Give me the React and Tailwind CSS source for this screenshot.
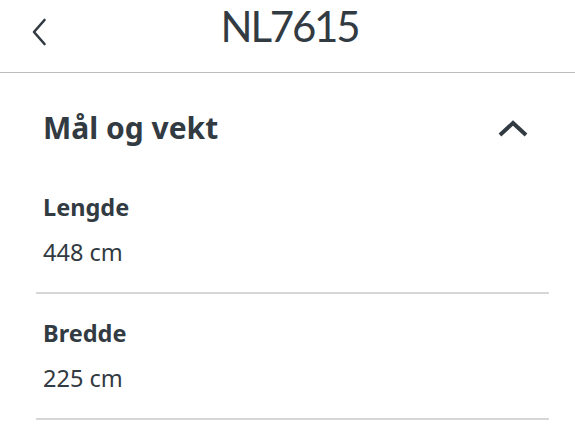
export default function App() {
  const rows = [
    { label: 'Lengde', value: '448 cm' },
    { label: 'Bredde', value: '225 cm' },
  ];
  return (
    <div className="w-[575px] h-[432px] bg-white text-[#323a42] overflow-hidden" style={{ fontFamily: '"Noto Sans", sans-serif' }}>
      <header className="relative h-[73px] flex items-start justify-center border-b border-[#bdbdbd]">
        <button className="absolute left-[28px] top-[18px] w-[22px] h-[28px] flex items-center justify-center">
          <svg width="18" height="28" viewBox="0 0 18 28" fill="none" stroke="#323a42" strokeWidth="2.6" strokeLinecap="round" strokeLinejoin="round">
            <path d="M14.5 2 L4 14 L14.5 26" />
          </svg>
        </button>
        <h1 className="pt-[5px] pl-[4px] text-[42px] leading-[42px] tracking-[-2.2px]" style={{ fontFamily: 'Lato, sans-serif' }}>NL7615</h1>
      </header>

      <section className="pl-[36px] pr-[26px]">
        <div className="flex items-center justify-between pl-[7px] pr-[20px] pt-[37px]">
          <h2 className="text-[30px] font-bold leading-[36px]">Mål og vekt</h2>
          <svg width="32" height="18" viewBox="0 0 32 18" fill="none" stroke="#323a42" strokeWidth="4" strokeLinejoin="miter">
            <path d="M3 16 L16 4 L29 16" />
          </svg>
        </div>

        <div className="mt-[22px]">
          {rows.map((r) => (
            <div key={r.label} className="border-b-2 border-[#d6d6d6] pl-[7px] pt-[24px] pb-[25px]">
              <div className="text-[23.5px] font-bold leading-[30px]">{r.label}</div>
              <div className="text-[23.5px] leading-[30px] mt-[15px]">{r.value}</div>
            </div>
          ))}
        </div>
      </section>
    </div>
  );
}
